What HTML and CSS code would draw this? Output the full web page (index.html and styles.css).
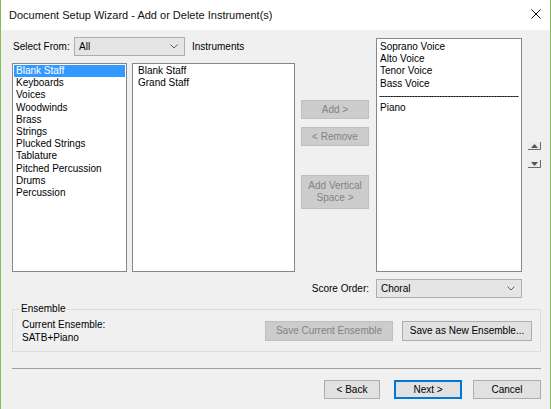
FILE: index.html
```html
<!DOCTYPE html>
<html>
<head>
<meta charset="utf-8">
<link rel="stylesheet" href="styles.css">
</head>
<body>
<div class="window">
  <div class="titlebar">
    <span class="title">Document Setup Wizard - Add or Delete Instrument(s)</span>
    <svg class="close" width="10" height="10" viewBox="0 0 10 10"><path d="M0.5 0.5 L9.5 9.5 M9.5 0.5 L0.5 9.5" stroke="#111" stroke-width="1" fill="none"/></svg>
  </div>
  <div class="main">
    <div class="left">
      <div class="toprow">
        <span class="lbl-select">Select From:</span>
        <div class="combo combo-all"><span>All</span><svg class="chev" width="8" height="5" viewBox="0 0 8 5"><path d="M0.5 0.5 L4 4 L7.5 0.5" stroke="#606060" fill="none"/></svg></div>
        <span class="lbl-instr">Instruments</span>
      </div>
      <div class="lists">
        <div class="listbox list-cat">
          <div class="item selected">Blank Staff</div>
          <div class="item">Keyboards</div>
          <div class="item">Voices</div>
          <div class="item">Woodwinds</div>
          <div class="item">Brass</div>
          <div class="item">Strings</div>
          <div class="item">Plucked Strings</div>
          <div class="item">Tablature</div>
          <div class="item">Pitched Percussion</div>
          <div class="item">Drums</div>
          <div class="item">Percussion</div>
        </div>
        <div class="listbox list-instr">
          <div class="item">Blank Staff</div>
          <div class="item">Grand Staff</div>
        </div>
      </div>
    </div>
    <div class="midbtns">
      <div class="btn disabled b-add">Add &gt;</div>
      <div class="btn disabled b-remove">&lt; Remove</div>
      <div class="btn disabled b-space">Add Vertical<br>Space &gt;</div>
    </div>
    <div class="listbox list-score">
      <div class="item">Soprano Voice</div>
      <div class="item">Alto Voice</div>
      <div class="item">Tenor Voice</div>
      <div class="item">Bass Voice</div>
      <div class="item dashes">---------------------------------------------------</div>
      <div class="item">Piano</div>
    </div>
    <div class="arrows">
      <svg width="13" height="8" viewBox="0 0 13 8"><rect x="0" y="0" width="13" height="8" fill="#ececec"/><path d="M3 6 L6.5 2 L10 6 Z" fill="#555"/><path d="M0 7.5 H12.5 V0" stroke="#6a6a6a" fill="none"/></svg>
      <svg class="down" width="13" height="8" viewBox="0 0 13 8"><rect x="0" y="0" width="13" height="8" fill="#ececec"/><path d="M3 2 L10 2 L6.5 6 Z" fill="#555"/><path d="M0 7.5 H12.5 V0" stroke="#6a6a6a" fill="none"/></svg>
    </div>
  </div>
  <div class="scorerow">
    <span class="lbl-score">Score Order:</span>
    <div class="combo combo-score"><span>Choral</span><svg class="chev" width="8" height="5" viewBox="0 0 8 5"><path d="M0.5 0.5 L4 4 L7.5 0.5" stroke="#606060" fill="none"/></svg></div>
  </div>
  <div class="group">
    <span class="legend">Ensemble</span>
    <div class="current">
      <div>Current Ensemble:</div>
      <div>SATB+Piano</div>
    </div>
    <div class="btn disabled b-savecur">Save Current Ensemble</div>
    <div class="btn b-savenew">Save as New Ensemble...</div>
  </div>
  <div class="sep"></div>
  <div class="footer">
    <div class="btn b-back">&lt; Back</div>
    <div class="btn b-next">Next &gt;</div>
    <div class="btn b-cancel">Cancel</div>
  </div>
</div>
</body>
</html>
```
FILE: styles.css
```css
* { box-sizing: border-box; }
html, body { margin: 0; padding: 0; }
body {
  width: 551px;
  height: 409px;
  overflow: hidden;
  font-family: "Liberation Sans", Arial, sans-serif;
  font-size: 10px;
  color: #000;
}
.window {
  width: 551px;
  height: 409px;
  background: #f0f0f0;
  border-left: 1px solid #86bb52;
  border-right: 1px solid #86bb52;
}
.titlebar {
  height: 30px;
  background: #fff;
  display: flex;
  align-items: center;
  padding-left: 8px;
  padding-right: 9px;
}
.title {
  font-size: 11px;
  color: #111;
  flex: 1;
  margin-top: -1px;
}
.close { display: block; margin-top: -2px; }

.main {
  display: flex;
  align-items: flex-start;
  padding: 7px 0 0 11px;
  height: 242px;
}
.left { width: 283px; }
.toprow {
  display: flex;
  align-items: center;
  height: 19px;
  margin-bottom: 7px;
}
.lbl-select { margin-left: 1px; width: 61px; }
.combo {
  height: 19px;
  background: #e5e5e5;
  border: 1px solid #adadad;
  display: flex;
  align-items: center;
  justify-content: space-between;
  padding: 0 6px 0 4px;
}
.combo-all { width: 111px; }
.lbl-instr { margin-left: 7px; }

.lists { display: flex; gap: 5px; }
.listbox {
  background: #fff;
  border: 1px solid #828790;
  padding: 1px;
}
.list-cat { width: 115px; height: 209px; }
.list-instr { width: 163px; height: 209px; padding-left: 3px; }
.item {
  height: 12.2px;
  line-height: 12px;
  padding-left: 2px;
  white-space: nowrap;
}
.selected { background: #3399ff; color: #fff; }

.midbtns {
  width: 68px;
  margin-left: 6px;
  padding-top: 63px;
  display: flex;
  flex-direction: column;
}
.btn {
  display: flex;
  align-items: center;
  justify-content: center;
  text-align: center;
  background: #e1e1e1;
  border: 1px solid #adadad;
  line-height: 12px;
}
.btn.disabled {
  background: #cccccc;
  border-color: #bfbfbf;
  color: #838383;
}
.b-add { height: 19px; }
.b-remove { height: 19px; margin-top: 8px; }
.b-space { height: 34px; margin-top: 29px; }

.list-score {
  width: 146px;
  height: 234px;
  margin-left: 7px;
  margin-top: 1px;
  padding-top: 2px;
  overflow: hidden;
}
.dashes { letter-spacing: -0.6px; padding-left: 1px; }
.arrows {
  margin-left: 6px;
  padding-top: 105px;
  display: flex;
  flex-direction: column;
}
.arrows svg { display: block; }
.arrows .down { margin-top: 10px; }

.scorerow {
  display: flex;
  align-items: center;
  justify-content: flex-end;
  margin-top: 7px;
  margin-right: 28px;
  height: 19px;
}
.lbl-score { margin-right: 7px; }
.combo-score { width: 146px; }

.group {
  position: relative;
  margin: 11px 9px 0 11px;
  height: 43px;
  border: 1px solid #dcdcdc;
  display: flex;
  align-items: flex-start;
  padding: 9px 8px 0 9px;
}
.legend {
  position: absolute;
  left: 7px;
  top: -7px;
  padding: 0 1px;
  background: #f0f0f0;
  line-height: 12px;
}
.current { line-height: 12.5px; }
.b-savecur { width: 128px; height: 20px; margin-left: auto; margin-top: 2px; }
.b-savenew { width: 130px; height: 20px; margin-left: 9px; margin-top: 2px; }

.sep {
  margin: 16px 9px 0 11px;
  height: 1px;
  background: #a0a0a0;
}
.footer {
  display: flex;
  justify-content: flex-end;
  margin-top: 11px;
  margin-right: 9px;
}
.b-back { width: 56px; height: 19px; }
.b-next { width: 68px; height: 19px; margin-left: 14px; border: 1px solid #0078d7; box-shadow: inset 0 0 0 1px #0078d7; }
.b-cancel { width: 68px; height: 19px; margin-left: 11px; }
```
